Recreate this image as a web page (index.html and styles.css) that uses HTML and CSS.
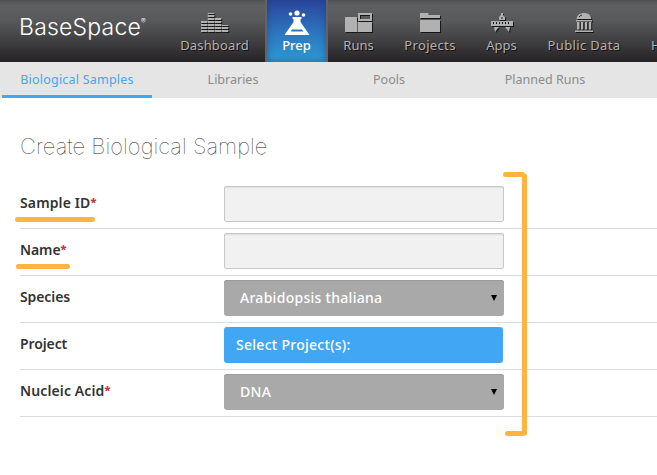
FILE: index.html
```html
<!DOCTYPE html>
<html lang="en">
<head>
<meta charset="utf-8">
<title>BaseSpace</title>
<link rel="stylesheet" href="styles.css">
</head>
<body>
<header class="header">
  <div class="logo"><span class="logo-name">BaseSpace</span><sup>®</sup></div>
  <nav class="nav">
    <a class="item dashboard"><svg width="28" height="21" viewBox="0 0 28 21"><path d="M3 20V9M10 20V1M17 20V6M24 20V13" stroke="currentColor" stroke-width="6.500" stroke-dasharray="2 1" fill="none"/></svg><span>Dashboard</span></a>
    <a class="item prep active"><svg width="26" height="26" viewBox="0 0 26 26"><g fill="currentColor"><circle cx="6.500" cy="5" r="1.800"/><circle cx="13" cy="4" r="2.600"/><circle cx="19.500" cy="6" r="1.800"/><path fill-rule="evenodd" d="M8.500 8H17.500V10H16.500V13L25.500 26H.500L9.500 13V10H8.500ZM8 20.500L6.500 22.500H19.500L18 20.500Z"/></g></svg><span>Prep</span></a>
    <a class="item runs"><svg width="28" height="21" viewBox="0 0 28 21"><path fill="currentColor" fill-rule="evenodd" d="M0 5H12V20H0ZM13 1H27V9H13ZM15 3V7H25V3ZM12.500 10H27V20H12.500Z"/></svg><span>Runs</span></a>
    <a class="item projects"><svg width="21" height="21" viewBox="0 0 21 21"><path fill="currentColor" d="M0 1H8L9 3H20V6H0ZM0 8H20V20H0Z"/></svg><span>Projects</span></a>
    <a class="item apps"><svg width="24" height="21" viewBox="0 0 24 21"><path fill="currentColor" fill-rule="evenodd" d="M11 1H13V3L15 5V8H9V5L11 3ZM11.500 5V7H12.500V5ZM1 9H23V14H1ZM3 10V12H4V10ZM6 10V12H7V10ZM9 10V12H10V10ZM12 10V12H13V10ZM15 10V12H16V10ZM18 10V12H19V10ZM4 15H9L5 20ZM15 15H20L19 20Z"/></svg><span>Apps</span></a>
    <a class="item public"><svg width="20" height="21" viewBox="0 0 20 21"><path fill="currentColor" d="M2.500 7C3 3 6 1 10 1S17 3 17.500 7ZM2 8H18V9.500H2ZM3 10H5.500V17.500H3ZM7 10H9.200V17.500H7ZM11 10H13.200V17.500H11ZM15 10H17.200V17.500H15ZM1 18.500H19V20H1Z"/><path d="M5 5Q6 3.500 8 3" stroke="#222" fill="none"/></svg><span>Public Data</span></a>
    <a class="item help"><span>Help</span></a>
  </nav>
</header>
<nav class="tabs">
  <a class="tab selected">Biological Samples</a><a class="tab">Libraries</a><a class="tab">Pools</a><a class="tab">Planned Runs</a>
</nav>
<main class="content">
  <h1>Create Biological Sample</h1>
  <form class="form">
    <div class="row"><label class="wide">Sample ID<b>*</b></label><div class="input"></div></div>
    <div class="row"><label>Name<b>*</b></label><div class="input"></div></div>
    <div class="row"><label>Species</label><div class="select"><span>Arabidopsis thaliana</span><i></i></div></div>
    <div class="row"><label>Project</label><div class="picker">Select Project(s):</div></div>
    <div class="row"><label class="wide">Nucleic Acid<b>*</b></label><div class="select"><span>DNA</span><i></i></div></div>
  </form>
</main>
<svg class="marks" width="657" height="475" viewBox="0 0 657 475"><path d="M17.500 219.500H92.500M18.500 266.500H67.500M505.500 174.500H522.500M524.500 176V433M507.500 433.500H523.500"/></svg>
</body>
</html>
```
FILE: styles.css
```css
* { box-sizing: border-box; }
body { margin: 0; width: 657px; height: 475px; overflow: hidden; position: relative; background: #fff; font-family: "Noto Sans", sans-serif; }
.header { height: 62px; display: flex; overflow: hidden; background: linear-gradient(#505153 0, #5f6062 6px, #58595b 20px, #414143 40px, #262326 61px); }
.logo { flex: 0 0 164px; padding: 14px 0 0 19px; color: #fff; font: 300 23px/26px Inter, sans-serif; white-space: nowrap; display: flex; }
.logo-name { letter-spacing: 0.2px; }
.logo sup { font-size: 7px; line-height: 16px; }
.nav { display: flex; flex: none; }
.item { height: 62px; display: flex; flex-direction: column; align-items: center; justify-content: flex-end; flex: none; color: #b1b1b1; font-size: 13px; line-height: 18px; padding-bottom: 8px; white-space: nowrap; text-shadow: 1px 1px 0 #111; }
.item svg { display: block; margin-bottom: 3px; filter: drop-shadow(1px 1px 0 #161616); }
.dashboard { width: 101px; letter-spacing: 0.15px; }
.prep { width: 63px; }
.runs { width: 61px; }
.projects { width: 82px; letter-spacing: 0.35px; }
.apps { width: 61px; }
.public { width: 104px; letter-spacing: 0.35px; }
.help { padding-left: 15px; }
.active { color: #fff; border: solid #626365; border-width: 0 2px; background: linear-gradient(#2c459c, #2d72bc 30px, #2c9bd5); box-shadow: inset 0 0 7px #123d8199; text-shadow: none; font-weight: 500; }
.active svg { margin-bottom: 1px; filter: none; }
.tabs { height: 36px; background: #e5e5e5; display: flex; gap: 6px; padding-left: 2px; }
.tab { width: 150px; height: 36px; text-align: center; font-size: 12.5px; line-height: 35px; color: #8b8b8b; white-space: nowrap; }
.selected { color: #41a7f5; border-bottom: 3px solid #41a7f5; letter-spacing: 0.22px; }
.content { padding: 33px 0 0 20px; }
h1 { margin: 0 0 20px; height: 31px; font: 100 22px/31px Inter, sans-serif; letter-spacing: 0.05px; color: #222; white-space: nowrap; }
.row { height: 47px; display: flex; padding-top: 4px; border-bottom: 1px solid #dcdcdc; }
label { width: 204px; line-height: 34px; font-size: 14px; font-weight: 600; letter-spacing: -0.1px; color: #333; white-space: nowrap; }
.wide { letter-spacing: 0.12px; }
label b { color: #bd3b40; font-size: 11px; position: relative; top: -2px; }
.input, .select, .picker { height: 36px; border-radius: 3px; width: 280px; }
.input { background: #f1f1f1; border: 1px solid #c8c8c8; border-radius: 2px; box-shadow: inset 0 1px 1px #ddd; }
.select, .picker { color: #fff; font-size: 14px; font-weight: 500; line-height: 36px; letter-spacing: 0.28px; padding-left: 16px; white-space: nowrap; }
.select { background: #a9a9a9; box-shadow: inset 0 1px 0 #9b9b9b; display: flex; align-items: center; justify-content: space-between; padding-right: 7px; }
.select i { border: solid transparent; border-width: 6px 3px 0; border-top-color: #000; }
.picker { width: 279px; padding-left: 12px; background: #41a7f5; }
.marks { position: absolute; left: 0; top: 0; fill: none; stroke: #ffb340; stroke-width: 5; stroke-linecap: round; }
```
